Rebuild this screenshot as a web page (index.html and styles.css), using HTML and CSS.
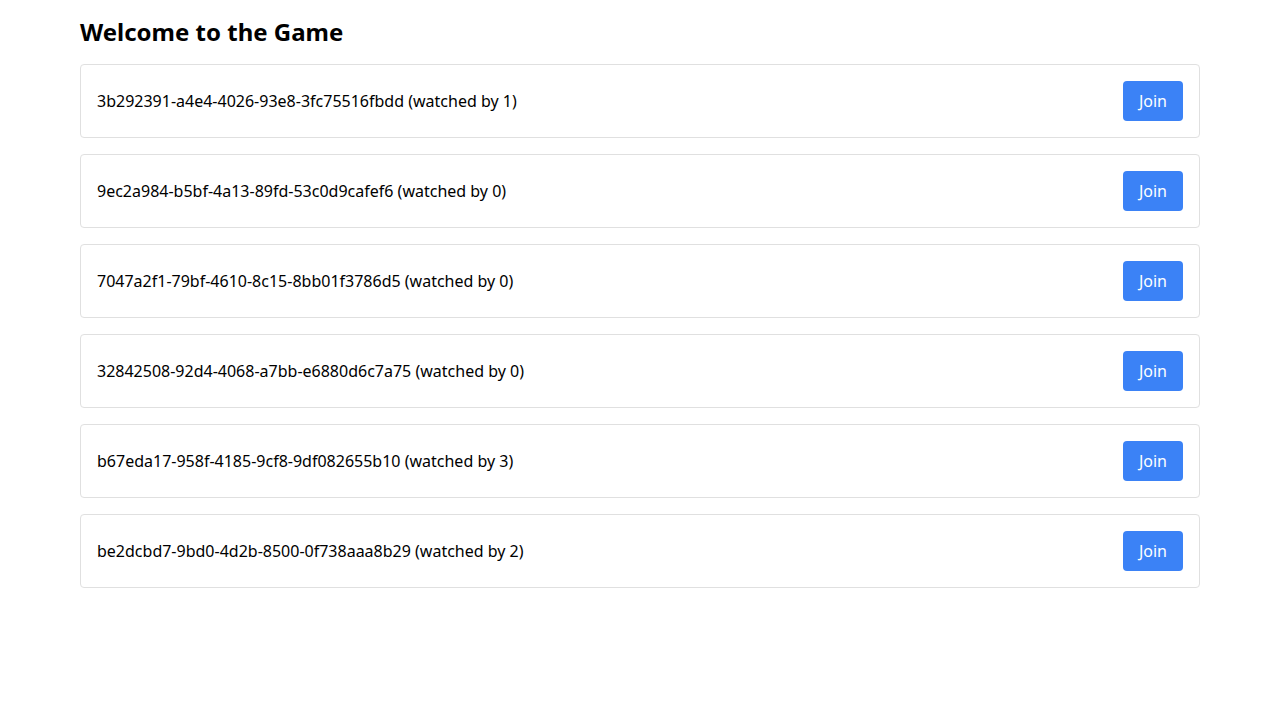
FILE: index.html
```html
<!DOCTYPE html>
<html lang="en">
<head>
    <meta charset="UTF-8">
    <meta name="viewport" content="width=device-width, initial-scale=1.0">
    <title>Welcome to the Game</title>
    <link rel="stylesheet" href="styles.css">
</head>
<body>
<div class="container">
    <h1>Welcome to the Game</h1>
    <ul class="game-list">
        <li class="game-item">
            <span>3b292391-a4e4-4026-93e8-3fc75516fbdd (watched by 1)</span>
            <button type="button" class="btn-join">Join</button>
        </li>
        <li class="game-item">
            <span>9ec2a984-b5bf-4a13-89fd-53c0d9cafef6 (watched by 0)</span>
            <button type="button" class="btn-join">Join</button>
        </li>
        <li class="game-item">
            <span>7047a2f1-79bf-4610-8c15-8bb01f3786d5 (watched by 0)</span>
            <button type="button" class="btn-join">Join</button>
        </li>
        <li class="game-item">
            <span>32842508-92d4-4068-a7bb-e6880d6c7a75 (watched by 0)</span>
            <button type="button" class="btn-join">Join</button>
        </li>
        <li class="game-item">
            <span>b67eda17-958f-4185-9cf8-9df082655b10 (watched by 3)</span>
            <button type="button" class="btn-join">Join</button>
        </li>
        <li class="game-item">
            <span>be2dcbd7-9bd0-4d2b-8500-0f738aaa8b29 (watched by 2)</span>
            <button type="button" class="btn-join">Join</button>
        </li>
    </ul>
</div>
</body>
</html>
```

FILE: styles.css
```css
body {
    margin: 0;
    font-family: "Noto Sans", "Open Sans", sans-serif;
    color: #000;
    background-color: #ffffff;
}

*,
*::before,
*::after {
    box-sizing: border-box;
}

.container {
    max-width: 1120px;
    margin: 0 auto;
    padding-top: 16px;
}

h1 {
    margin: 0 0 16px;
    font-size: 24px;
    line-height: 32px;
    font-weight: bold;
}

.game-list {
    list-style: none;
    margin: 0;
    padding: 0;
    display: flex;
    flex-direction: column;
    gap: 16px;
}

.game-item {
    display: flex;
    align-items: center;
    justify-content: space-between;
    padding: 16px;
    border: 1px solid #e0e0e0;
    border-radius: 4px;
    font-size: 16px;
    line-height: 24px;
}

.btn-join {
    background-color: #3b82f6;
    color: #fff;
    border: none;
    padding: 8px 16px;
    border-radius: 4px;
    font-family: inherit;
    font-size: 16px;
    line-height: 24px;
    cursor: pointer;
}
```
